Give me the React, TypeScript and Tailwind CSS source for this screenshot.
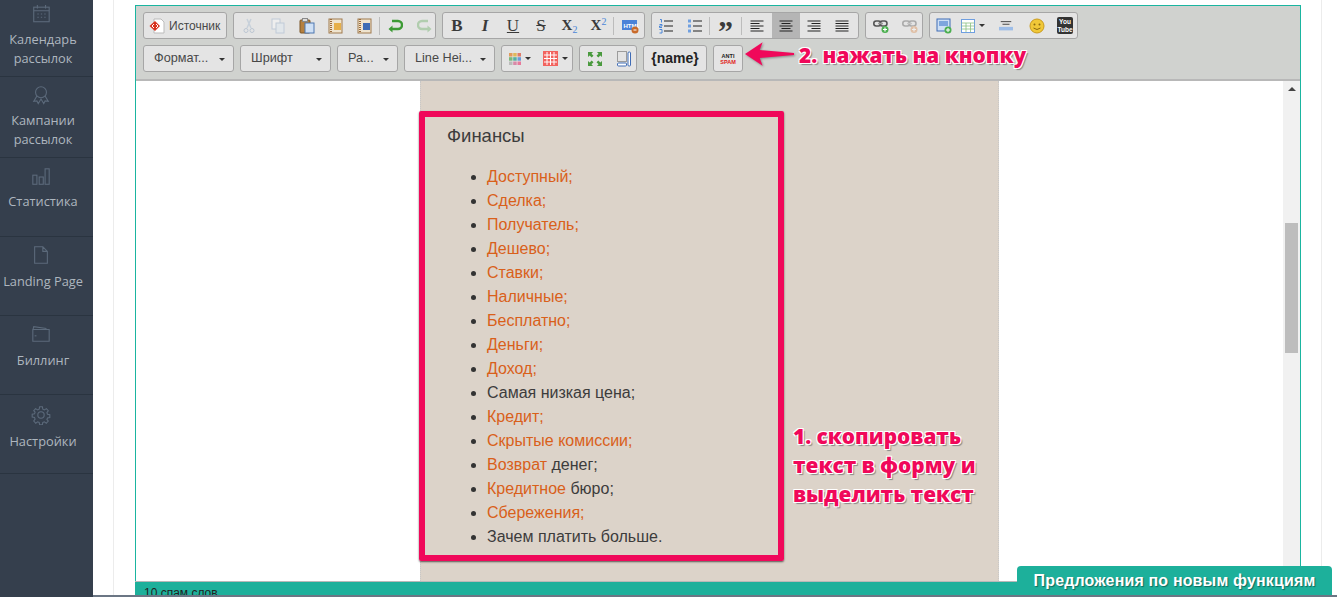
import React from "react";

const navIcon = "w-[20px] h-[20px] fill-none stroke-[#5c6a7b] stroke-[1.2]";

const navItems = [
  {
    label: ["Календарь", "рассылок"],
    h: "h-[77px]",
    pt: "pt-[4px]",
    mt: "mt-[6px]",
    icon: (
      <svg viewBox="0 0 22 22" className={navIcon}>
        <rect x="3" y="3.500" width="17" height="16" />
        <path d="M3 7.500h17M7 1v4M16 1v4" />
        <path d="M7 11h1.500M10.800 11h1.500M14.600 11h1.500M7 14.500h1.500M10.800 14.500h1.500M14.600 14.500h1.500" />
      </svg>
    ),
  },
  {
    label: ["Кампании", "рассылок"],
    h: "h-[81px]",
    pt: "pt-[8px]",
    mt: "mt-[6px]",
    icon: (
      <svg viewBox="0 0 22 22" className={navIcon}>
        <circle cx="11" cy="8" r="6" />
        <path d="M6.500 12 3 18l3.500-.5L8 20.500l3-5 3 5 1.500-3 3.500.5-3.500-6" />
      </svg>
    ),
  },
  {
    label: ["Статистика"],
    h: "h-[79px]",
    pt: "pt-[9px]",
    mt: "mt-[5px]",
    icon: (
      <svg viewBox="0 0 22 22" className={navIcon}>
        <rect x="2" y="9" width="4.500" height="10" />
        <rect x="9" y="11" width="4.500" height="8" />
        <rect x="15.500" y="2" width="4.500" height="17" />
      </svg>
    ),
  },
  {
    label: ["Landing Page"],
    h: "h-[79px]",
    pt: "pt-[8px]",
    mt: "mt-[7px]",
    icon: (
      <svg viewBox="0 0 22 22" className={navIcon}>
        <path d="M4 2h9l5 5v13H4zM13 2v5h5" />
      </svg>
    ),
  },
  {
    label: ["Биллинг"],
    h: "h-[79px]",
    pt: "pt-[8px]",
    mt: "mt-[7px]",
    icon: (
      <svg viewBox="0 0 22 22" className={navIcon}>
        <path d="M2 8v11h18V6H2zM2 7l1-4 14 2" />
        <path d="M4 13h2" />
      </svg>
    ),
  },
  {
    label: ["Настройки"],
    h: "h-[79px]",
    pt: "pt-[10px]",
    mt: "mt-[7px]",
    icon: (
      <svg viewBox="0 0 22 22" className={navIcon}>
        <circle cx="11" cy="11" r="3.500" />
        <path d="M9.500 2h3l.5 2.600 1.700.8L17 4l2 2.300-1.500 2.100.6 1.700 2.600.6v3l-2.600.6-.6 1.700L19 17.600 16.800 20l-2.100-1.500-1.700.7-.5 2.600h-3L9 19.200l-1.700-.7L5.200 20 3 17.600l1.500-2.100-.6-1.700-2.600-.6v-3l2.600-.6.6-1.700L3 6.300 5 4l2.300 1.400 1.700-.8z" />
      </svg>
    ),
  },
];

const Caret = () => (
  <span className="w-0 h-0 border-x-[3px] border-x-transparent border-t-[3px] border-t-[#333]" />
);

function Tool({ children, w = "w-[29px]", active = false }: { children?: React.ReactNode; w?: string; active?: boolean }) {
  return (
    <span className={`${w} h-full flex items-center justify-center gap-[4px] shrink-0 ${active ? "bg-[#b5b5b5]" : ""}`}>
      {children}
    </span>
  );
}

const Sep = () => <span className="w-px h-[18px] bg-[#bcbcbc] shrink-0" />;

function Group({ w, children }: { w: string; children: React.ReactNode }) {
  return (
    <div className={`${w} h-[27px] flex items-center shrink-0 bg-[#e4e4e4] border border-[#a6a6a6] rounded-[3px] overflow-hidden`}>
      {children}
    </div>
  );
}

function Combo({ w, label }: { w: string; label: string }) {
  return (
    <div className={`${w} h-[27px] flex items-center justify-between pl-[10px] pr-[8px] pt-[1px] shrink-0 bg-[#e4e4e4] border border-[#a6a6a6] rounded-[3px] text-[12.700px] text-[#484848]`}>
      <span>{label}</span>
      <Caret />
    </div>
  );
}

const ico = "w-[16px] h-[16px]";

const Lines = ({ kind }: { kind: "left" | "center" | "right" | "full" }) => {
  const rows = [0, 1, 2, 3, 4];
  return (
    <svg viewBox="0 0 14 12" className="w-[14px] h-[12px]">
      {rows.map((r) => {
        const short = r % 2 === 1 ? 9 : 13;
        const w = kind === "full" ? 13 : short;
        const x = kind === "left" || kind === "full" ? 0.5 : kind === "center" ? (14 - w) / 2 : 13.5 - w;
        return <rect key={r} x={x} y={r * 2.5 + 0.5} width={w} height="1" fill="#222" />;
      })}
    </svg>
  );
};

const Link2 = ({ plus, muted }: { plus: string; muted?: boolean }) => (
  <svg viewBox="0 0 16 16" className={`${ico} ${muted ? "opacity-40" : ""}`}>
    <rect x="0.800" y="3" width="7" height="5" rx="2.400" fill="none" stroke="#555" strokeWidth="1.600" />
    <rect x="7" y="3" width="7" height="5" rx="2.400" fill="none" stroke="#555" strokeWidth="1.600" />
    <path d="M5 5.500h5" stroke="#999" strokeWidth="1.400" />
    <circle cx="12" cy="11.500" r="3.500" fill={plus} />
    <path d="M10 11.500h4M12 9.500v4" stroke="#fff" strokeWidth="1.200" />
  </svg>
);

const Notebook = ({ fill }: { fill: string }) => (
  <svg viewBox="0 0 16 16" className={ico}>
    <rect x="1" y="1" width="13" height="14" fill="#efe4cf" stroke="#a07a4e" />
    <path d="M3 1v14" stroke="#9c6b3a" strokeWidth="2" strokeDasharray="1 1" />
    <rect x="6" y="5" width="7" height="7" fill={fill} />
  </svg>
);

const serif = "font-['Liberation_Serif',serif] text-[#3a3a3a]";

const hits: [string, string][] = [
  ["Доступный;", ""],
  ["Сделка;", ""],
  ["Получатель;", ""],
  ["Дешево;", ""],
  ["Ставки;", ""],
  ["Наличные;", ""],
  ["Бесплатно;", ""],
  ["Деньги;", ""],
  ["Доход;", ""],
  ["", "Самая низкая цена;"],
  ["Кредит;", ""],
  ["Скрытые комиссии;", ""],
  ["Возврат", " денег;"],
  ["Кредитное", " бюро;"],
  ["Сбережения;", ""],
  ["", "Зачем платить больше."],
];

const callout =
  "absolute font-['Open_Sans',sans-serif] font-extrabold text-[20.800px] text-[#f0085a] whitespace-nowrap [text-shadow:1px_1px_0_#fff,-1px_-1px_0_#fff,1px_-1px_0_#fff,-1px_1px_0_#fff,2px_2px_1px_#888]";

export default function App() {
  return (
    <div className="relative w-[1337px] h-[597px] overflow-hidden flex bg-white font-['Liberation_Sans',Arial,sans-serif]">
      {/* Sidebar */}
      <aside className="w-[93px] shrink-0 bg-[#353f4d] font-['Open_Sans',sans-serif] text-[12.800px] leading-[18.500px] text-[#aeb6bf]">
        {navItems.map((item) => (
          <div key={item.label[0]} className={`${item.h} ${item.pt} border-b border-[#2a3440] flex flex-col items-center pr-[12px]`}>
            {item.icon}
            <div className={`${item.mt} ml-[5px] text-center whitespace-nowrap`}>
              {item.label.map((l) => (
                <div key={l}>{l}</div>
              ))}
            </div>
          </div>
        ))}
      </aside>

      {/* Main */}
      <main className="flex-1 flex flex-col pl-[20px] pr-[15px]">
        <div className="flex-1 min-h-0 border-x border-[#ececec] pl-[21px] pr-[20px] pt-[5px]">
          <div className="h-full border-x border-t border-[#1ab5a0] flex flex-col">
            {/* Toolbar */}
            <div className="h-[75px] shrink-0 bg-[#d0d2cf] border-b-2 border-[#b8b8b8] pl-[7px] pt-[6px] flex flex-col gap-[6px]">
              <div className="flex gap-[6px]">
                <Group w="w-[84px]">
                  <Tool w="w-[25px]">
                    <svg viewBox="0 0 16 16" className={ico}>
                      <path d="M5 1h7l3 3v11H5z" fill="#fff" stroke="#bbb" />
                      <path d="M0.500 8 6 3l5 5-5 5z" fill="#d8331f" />
                      <path d="M5 6 3 8l2 2M7 6l2 2-2 2" fill="none" stroke="#fff" />
                    </svg>
                  </Tool>
                  <span className="text-[12px] text-[#484848]">Источник</span>
                </Group>
                <Group w="w-[203px]">
                  <Tool>
                    <svg viewBox="0 0 16 16" className={`${ico} opacity-40`}>
                      <path d="M10 1 6 10M6 1l4 9" stroke="#9db4cc" strokeWidth="1.500" />
                      <circle cx="5" cy="12.500" r="2" fill="none" stroke="#7f9ab8" />
                      <circle cx="11" cy="12.500" r="2" fill="none" stroke="#7f9ab8" />
                    </svg>
                  </Tool>
                  <Tool>
                    <svg viewBox="0 0 16 16" className={`${ico} opacity-40`}>
                      <rect x="2" y="1" width="8" height="10" fill="#fff" stroke="#8aa5c4" />
                      <rect x="6" y="5" width="8" height="10" fill="#dfe9f5" stroke="#8aa5c4" />
                    </svg>
                  </Tool>
                  <Tool>
                    <svg viewBox="0 0 16 16" className={ico}>
                      <rect x="1" y="2" width="10" height="13" rx="1" fill="#b5803f" stroke="#7a5426" />
                      <rect x="3.500" y="0.500" width="5" height="3" fill="#ddd" stroke="#888" />
                      <rect x="6" y="5" width="9" height="10" fill="#cfe0f5" stroke="#4c77b0" />
                    </svg>
                  </Tool>
                  <Tool>
                    <Notebook fill="#e6b04a" />
                  </Tool>
                  <Tool>
                    <Notebook fill="#3f6cb5" />
                  </Tool>
                  <Sep />
                  <Tool w="w-[30px]">
                    <svg viewBox="0 0 16 16" className={ico}>
                      <path d="M5 3h6a3.500 3.500 0 0 1 0 8H3" fill="none" stroke="#3d9a35" strokeWidth="2.400" />
                      <path d="M5.500 7.500 1.500 11l4 3.500z" fill="#3d9a35" />
                    </svg>
                  </Tool>
                  <Tool>
                    <svg viewBox="0 0 16 16" className={`${ico} opacity-30`}>
                      <path d="M11 3H5a3.500 3.500 0 0 0 0 8h8" fill="none" stroke="#3d9a35" strokeWidth="2.400" />
                      <path d="M10.500 7.500l4 3.500-4 3.500z" fill="#3d9a35" />
                    </svg>
                  </Tool>
                </Group>
                <Group w="w-[203px]">
                  <Tool w="w-[28px]"><span className={`${serif} font-bold text-[17px]`}>B</span></Tool>
                  <Tool w="w-[28px]"><span className={`${serif} font-bold italic text-[17px]`}>I</span></Tool>
                  <Tool w="w-[28px]"><span className={`${serif} text-[17px] underline`}>U</span></Tool>
                  <Tool w="w-[28px]"><span className={`${serif} text-[17px] line-through`}>S</span></Tool>
                  <Tool w="w-[29px]">
                    <span className={`${serif} font-bold text-[15px]`}>X<sub className="text-[10px] text-[#4a86d8] font-normal">2</sub></span>
                  </Tool>
                  <Tool w="w-[29px]">
                    <span className={`${serif} font-bold text-[15px]`}>X<sup className="text-[10px] text-[#4a86d8] font-normal">2</sup></span>
                  </Tool>
                  <Sep />
                  <Tool w="w-[31px]">
                    <svg viewBox="0 0 18 16" className="w-[18px] h-[16px]">
                      <rect x="1" y="2" width="15" height="10" fill="#4a82d8" />
                      <text x="2.500" y="9.500" fontSize="6" fontWeight="700" fill="#fff" fontFamily="Liberation Sans">HTML</text>
                      <circle cx="14" cy="12" r="3.500" fill="#c96a2a" />
                      <path d="M12.500 12h3" stroke="#fff" />
                    </svg>
                  </Tool>
                </Group>
                <Group w="w-[208px]">
                  <Tool w="w-[28px]">
                    <svg viewBox="0 0 16 16" className={ico}>
                      <path d="M6 3h9M6 8h9M6 13h9" stroke="#222" />
                      <path d="M2 1.500h1.500v3M1.500 6.500h2.500v1.500H1.500v1.500H4M1.500 11.500H4V15H1.500" fill="none" stroke="#4a86d8" />
                    </svg>
                  </Tool>
                  <Tool w="w-[29px]">
                    <svg viewBox="0 0 16 16" className={ico}>
                      <path d="M6 3h9M6 8h9M6 13h9" stroke="#222" />
                      <rect x="1" y="1.500" width="3" height="3" fill="#6f9fe0" />
                      <rect x="1" y="6.500" width="3" height="3" fill="#6f9fe0" />
                      <rect x="1" y="11.500" width="3" height="3" fill="#6f9fe0" />
                    </svg>
                  </Tool>
                  <Sep />
                  <Tool w="w-[31px]">
                    <span className={`${serif} font-bold text-[30px] leading-none pt-[11px]`}>”</span>
                  </Tool>
                  <Sep />
                  <Tool w="w-[30px]"><Lines kind="left" /></Tool>
                  <Tool w="w-[28px]" active><Lines kind="center" /></Tool>
                  <Tool w="w-[28px]"><Lines kind="right" /></Tool>
                  <Tool w="w-[28px]"><Lines kind="full" /></Tool>
                </Group>
                <Group w="w-[58px]">
                  <Tool><Link2 plus="#4caf50" /></Tool>
                  <Tool><Link2 plus="#d98a4a" muted /></Tool>
                </Group>
                <Group w="w-[149px]">
                  <Tool w="w-[28px]">
                    <svg viewBox="0 0 16 16" className={ico}>
                      <rect x="1" y="1" width="13" height="12" fill="#cfe0f5" stroke="#3f6cb5" />
                      <rect x="3" y="3" width="9" height="5" fill="#7ea6de" />
                      <circle cx="12" cy="12" r="3.500" fill="#4caf50" />
                      <path d="M10 12h4M12 10v4" stroke="#fff" />
                    </svg>
                  </Tool>
                  <Tool w="w-[30px]">
                    <svg viewBox="0 0 14 16" className="w-[14px] h-[16px]">
                      <rect x="0.500" y="1.500" width="13" height="13" fill="#fff" stroke="#6f9fe0" />
                      <path d="M0.500 5h13M0.500 8h13M0.500 11h13M5 5v9M9.500 5v9" stroke="#8cc084" strokeWidth="0.800" />
                    </svg>
                    <Caret />
                  </Tool>
                  <Tool w="w-[35px]">
                    <svg viewBox="0 0 16 14" className="w-[14px] h-[14px]">
                      <path d="M2 2h12M4 5h8" stroke="#333" />
                      <rect x="0" y="8" width="16" height="4" fill="#9dbde8" />
                    </svg>
                  </Tool>
                  <Tool w="w-[28px]">
                    <svg viewBox="0 0 16 16" className={ico}>
                      <circle cx="8" cy="8" r="7" fill="#f0c838" stroke="#c99a1e" />
                      <circle cx="5.500" cy="6.500" r="1" fill="#8a6a10" />
                      <circle cx="10.500" cy="6.500" r="1" fill="#8a6a10" />
                      <path d="M4.500 10q3.500 3 7 0" fill="none" stroke="#8a6a10" />
                    </svg>
                  </Tool>
                  <Tool w="w-[28px]">
                    <span className="w-[16px] h-[17px] bg-[#333] rounded-[2px] flex flex-col items-center justify-center text-[6.500px] leading-[7.500px] font-bold text-white">
                      <span>You</span>
                      <span>Tube</span>
                    </span>
                  </Tool>
                </Group>
              </div>
              <div className="flex">
                <Combo w="w-[91px] mr-[6px]" label="Формат..." />
                <Combo w="w-[91px] mr-[6px]" label="Шрифт" />
                <Combo w="w-[61px] mr-[6px]" label="Ра..." />
                <Combo w="w-[91px] mr-[6px]" label="Line Hei..." />
                <Group w="w-[72px] mr-[6px]">
                  <Tool w="w-[36px]">
                    <svg viewBox="0 0 12 12" className="w-[12px] h-[12px]">
                      <rect x="0" y="0" width="3.500" height="3.500" fill="#e29a5b" />
                      <rect x="4.200" y="0" width="3.500" height="3.500" fill="#e0b85a" />
                      <rect x="8.500" y="0" width="3.500" height="3.500" fill="#e07a6a" />
                      <rect x="0" y="4.200" width="3.500" height="3.500" fill="#7ab87a" />
                      <rect x="4.200" y="4.200" width="3.500" height="3.500" fill="#55b0a0" />
                      <rect x="8.500" y="4.200" width="3.500" height="3.500" fill="#6a9ad8" />
                      <rect x="0" y="8.500" width="3.500" height="3.500" fill="#bbb" />
                      <rect x="4.200" y="8.500" width="3.500" height="3.500" fill="#d88aa8" />
                      <rect x="8.500" y="8.500" width="3.500" height="3.500" fill="#e87a9a" />
                    </svg>
                    <Caret />
                  </Tool>
                  <Tool w="w-[34px]">
                    <svg viewBox="0 0 15 15" className="w-[15px] h-[15px]">
                      <rect width="15" height="15" fill="#f2635e" />
                      <path d="M4 1v13M7.500 1v13M11 1v13M1 4h13M1 7.500h13M1 11h13" stroke="#fff" />
                    </svg>
                    <Caret />
                  </Tool>
                </Group>
                <Group w="w-[58px] mr-[6px]">
                  <Tool>
                    <svg viewBox="0 0 16 16" className={ico}>
                      <g fill="#4a9a3f">
                        <path d="M1 1h5L4.500 2.700l2 2-1.800 1.800-2-2L1 6zM15 1v5l-1.700-1.500-2 2-1.800-1.800 2-2L10 1zM1 15v-5l1.700 1.500 2-2 1.800 1.800-2 2L6 15zM15 15h-5l1.500-1.700-2-2 1.800-1.800 2 2L15 10z" />
                      </g>
                    </svg>
                  </Tool>
                  <Tool>
                    <svg viewBox="0 0 14 16" className="w-[14px] h-[16px]">
                      <rect x="0.500" y="0.500" width="9" height="10" fill="none" stroke="#555" strokeDasharray="1 1" />
                      <rect x="11" y="1" width="2.500" height="14" rx="1" fill="#fff" stroke="#3f6cb5" />
                      <rect x="0.500" y="12" width="9" height="3" rx="1" fill="#fff" stroke="#3f6cb5" />
                    </svg>
                  </Tool>
                </Group>
                <div className="w-[64px] h-[27px] mr-[6px] shrink-0 bg-[#e4e4e4] border border-[#a6a6a6] rounded-[3px] flex items-center justify-center font-bold text-[14px] text-[#222]">
                  {"{name}"}
                </div>
                <div className="w-[30px] h-[27px] shrink-0 bg-[#e4e4e4] border border-[#a6a6a6] rounded-[3px] flex flex-col items-center justify-center text-[5.500px] leading-[6px] font-bold">
                  <span className="text-[#222]">ANTI</span>
                  <span className="text-[#e02020]">SPAM</span>
                </div>
              </div>
            </div>

            {/* Content */}
            <div className="flex-1 min-h-0 flex">
              <div className="flex-1 min-w-0 flex justify-center bg-white">
                <div className="w-[579px] bg-[#dcd3c9] border-x border-dotted border-[#c8c8c8] pl-[26px] pt-[44px] text-[#3c3c3c] overflow-hidden">
                  <p className="text-[18.500px] leading-[22px] mb-[18px]">Финансы</p>
                  <ul className="list-disc pl-[40px] text-[16px] leading-[24px] marker:text-[#333]">
                    {hits.map(([hit, rest], i) => (
                      <li key={i}>
                        <span className="text-[#d9601a]">{hit}</span>
                        {rest}
                      </li>
                    ))}
                  </ul>
                </div>
              </div>
              {/* Scrollbar */}
              <div className="w-[17px] shrink-0 bg-[#f1f1f1] flex flex-col items-center pt-[6px]">
                <span className="w-0 h-0 border-x-[4px] border-x-transparent border-b-[4px] border-b-[#444]" />
                <span className="w-[13px] h-[130px] bg-[#bdbdbd] mt-[132px]" />
              </div>
            </div>

            {/* Status bar */}
            <div className="h-[14px] -mx-px shrink-0 bg-[#1db09b] overflow-hidden pl-[9px] pt-[4px] border-t border-[#b8b8b8] text-[12px] leading-[15px] text-[#222]">
              10 спам слов
            </div>
          </div>
        </div>
        <div className="h-[2px] shrink-0 -ml-[20px] -mr-[15px] bg-[#6b7684]" />
      </main>

      {/* Annotations */}
      <div className="absolute left-[419px] top-[111px] w-[365px] h-[450px] border-[6px] border-[#f0085a] rounded-[2px] shadow-[0_1px_2px_rgba(0,0,0,0.6)]" />
      <svg viewBox="0 0 50 24" className="absolute left-[745px] top-[42px] w-[49px] h-[24px] drop-shadow-[1px_1px_1px_rgba(0,0,0,0.35)]">
        <path d="M0 12 18 0l-3 8 35 3v2l-35 3 3 8z" fill="#f0085a" />
      </svg>
      <div className={`${callout} left-[799px] top-[41px] leading-[28px]`}>2. нажать на кнопку</div>
      <div className={`${callout} left-[793px] top-[422px] leading-[29px]`}>
        <div>1. скопировать</div>
        <div>текст в форму и</div>
        <div>выделить текст</div>
      </div>

      {/* Feature request tab */}
      <div className="absolute left-[1017px] top-[566px] w-[315px] h-[29px] bg-[#1db09b] rounded-t-[4px] flex items-center justify-center font-bold text-[16px] tracking-[0.150px] text-white [text-shadow:1px_1px_1px_rgba(0,0,0,0.4)]">
        Предложения по новым функциям
      </div>
    </div>
  );
}
